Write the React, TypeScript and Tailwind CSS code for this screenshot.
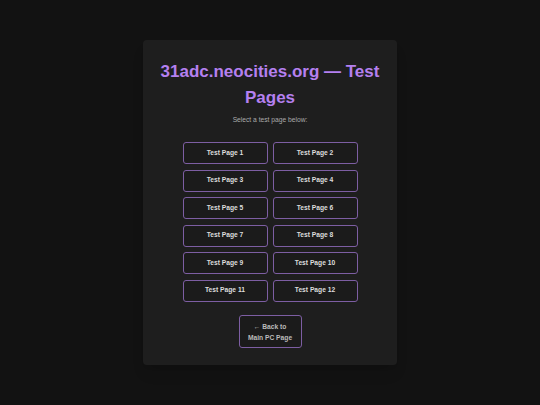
import React from 'react';

const pages = Array.from({ length: 12 }, (_, i) => `Test Page ${i + 1}`);

export default function App() {
  return (
    <div className="min-h-screen bg-[#121212] flex justify-center pt-10 font-['Liberation_Sans',Arial,sans-serif]">
      <div className="w-[254px] h-[325px] bg-[#1e1e1e] rounded-[4px] shadow-lg flex flex-col items-center px-3 pt-[19px]">
        <h1 className="text-[17px] leading-[26px] font-bold text-[#b580f0] text-center">
          31adc.neocities.org — Test Pages
        </h1>
        <p className="text-[6.7px] leading-[10px] text-[#aaaaaa] mt-[4px]">Select a test page below:</p>
        <div className="grid grid-cols-2 gap-x-[5px] gap-y-[5.5px] mt-[17px]">
          {pages.map((p) => (
            <a
              key={p}
              href="#"
              className="w-[85px] h-[22px] flex items-center justify-center bg-[#1b1b1b] border border-[#7d5ea3] rounded-[3px] text-[6.7px] font-bold text-[#dddddd]"
            >
              {p}
            </a>
          ))}
        </div>
        <a
          href="#"
          className="mt-[13.5px] w-[63px] h-[33px] flex items-center justify-center text-center bg-[#1b1b1b] border border-[#7d5ea3] rounded-[3px] text-[6.7px] leading-[11px] font-bold text-[#bbbbbb]"
        >
          ← Back to
          <br />
          Main PC Page
        </a>
      </div>
    </div>
  );
}
